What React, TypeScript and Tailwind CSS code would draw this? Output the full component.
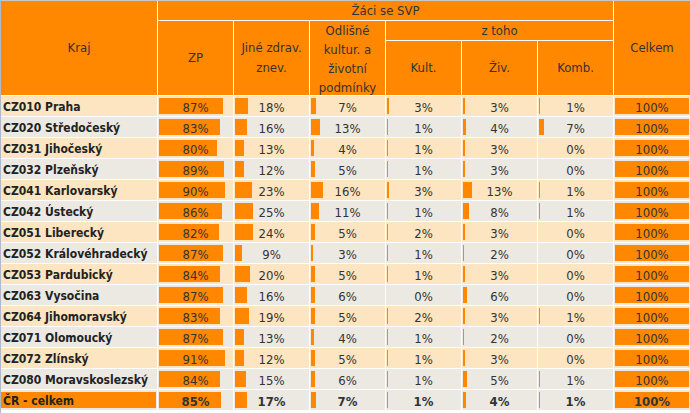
import React from "react";

type Row = { name: string; v: number[]; total?: boolean };

const rows: Row[] = [
  { name: "CZ010 Praha", v: [87, 18, 7, 3, 3, 1, 100] },
  { name: "CZ020 Středočeský", v: [83, 16, 13, 1, 4, 7, 100] },
  { name: "CZ031 Jihočeský", v: [80, 13, 4, 1, 3, 0, 100] },
  { name: "CZ032 Plzeňský", v: [89, 12, 5, 1, 3, 0, 100] },
  { name: "CZ041 Karlovarský", v: [90, 23, 16, 3, 13, 1, 100] },
  { name: "CZ042 Ústecký", v: [86, 25, 11, 1, 8, 1, 100] },
  { name: "CZ051 Liberecký", v: [82, 24, 5, 2, 3, 0, 100] },
  { name: "CZ052 Královéhradecký", v: [87, 9, 3, 1, 2, 0, 100] },
  { name: "CZ053 Pardubický", v: [84, 20, 5, 1, 3, 0, 100] },
  { name: "CZ063 Vysočina", v: [87, 16, 6, 0, 6, 0, 100] },
  { name: "CZ064 Jihomoravský", v: [83, 19, 5, 2, 3, 1, 100] },
  { name: "CZ071 Olomoucký", v: [87, 13, 4, 1, 2, 0, 100] },
  { name: "CZ072 Zlínský", v: [91, 12, 5, 1, 3, 0, 100] },
  { name: "CZ080 Moravskoslezský", v: [84, 15, 6, 1, 5, 1, 100] },
  { name: "ČR - celkem", v: [85, 17, 7, 1, 4, 1, 100], total: true },
];

const font =
  "font-['DejaVu_Sans_Condensed','DejaVu_Sans',sans-serif] font-stretch-condensed";

function BarCell({ value, bg, bold }: { value: number; bg: string; bold?: boolean }) {
  return (
    <div className={`relative flex items-center justify-center ${bg}`}>
      {value > 0 && (
        <div
          className="absolute left-px top-[2px] bottom-[2px] bg-[#ff8800]"
          style={{ width: `calc((100% - 2px) * ${value / 100})`, minWidth: 1 }}
        />
      )}
      <span className={`relative pt-[2px] text-[13px] leading-none text-[#333] ${bold ? "font-bold" : ""}`}>
        {value}%
      </span>
    </div>
  );
}

export default function App() {
  const hdr = "bg-[#ff8800] flex items-center justify-center text-center text-[13px] text-[#333]";
  return (
    <div className={`w-[690px] h-[413px] bg-white border-t border-l border-t-[#c8c8c8] border-l-[#aebacb] ${font}`}>
      <div className="grid grid-cols-[156px_75px_75px_75px_75px_75px_75px_76px] grid-rows-[19px_19px_54px] auto-rows-[20px] gap-px bg-white">
        <div className={`${hdr} col-start-1 row-start-1 row-span-3`}>Kraj</div>
        <div className={`${hdr} col-start-2 col-span-6 row-start-1`}>Žáci se SVP</div>
        <div className={`${hdr} col-start-8 row-start-1 row-span-3`}>Celkem</div>
        <div className={`${hdr} col-start-2 row-start-2 row-span-2`}>ZP</div>
        <div className={`${hdr} col-start-3 row-start-2 row-span-2 leading-[20px]`}>
          Jiné zdrav.
          <br />
          znev.
        </div>
        <div className={`${hdr} col-start-4 row-start-2 row-span-2 leading-[19px] overflow-visible`}>
          <div className="pt-[2px]">
            Odlišné
            <br />
            kultur. a
            <br />
            životní
            <br />
            podmínky
          </div>
        </div>
        <div className={`${hdr} col-start-5 col-span-3 row-start-2`}>z toho</div>
        <div className={`${hdr} col-start-5 row-start-3`}>Kult.</div>
        <div className={`${hdr} col-start-6 row-start-3`}>Živ.</div>
        <div className={`${hdr} col-start-7 row-start-3`}>Komb.</div>

        {rows.map((r, i) => {
          const bg = i % 2 === 0 && !r.total ? "bg-[#fce5c0]" : "bg-[#ece9e3]";
          return (
            <React.Fragment key={r.name}>
              <div className={`relative flex items-center ${bg}`}>
                {r.total && (
                  <div className="absolute left-0 right-px top-[2px] bottom-[2px] bg-[#ff8800]" />
                )}
                <span className="relative pl-[2px] pt-[2px] text-[12px] leading-none font-bold text-[#222] whitespace-nowrap">
                  {r.name}
                </span>
              </div>
              {r.v.map((v, j) => (
                <BarCell key={j} value={v} bg={bg} bold={r.total} />
              ))}
            </React.Fragment>
          );
        })}
      </div>
    </div>
  );
}
